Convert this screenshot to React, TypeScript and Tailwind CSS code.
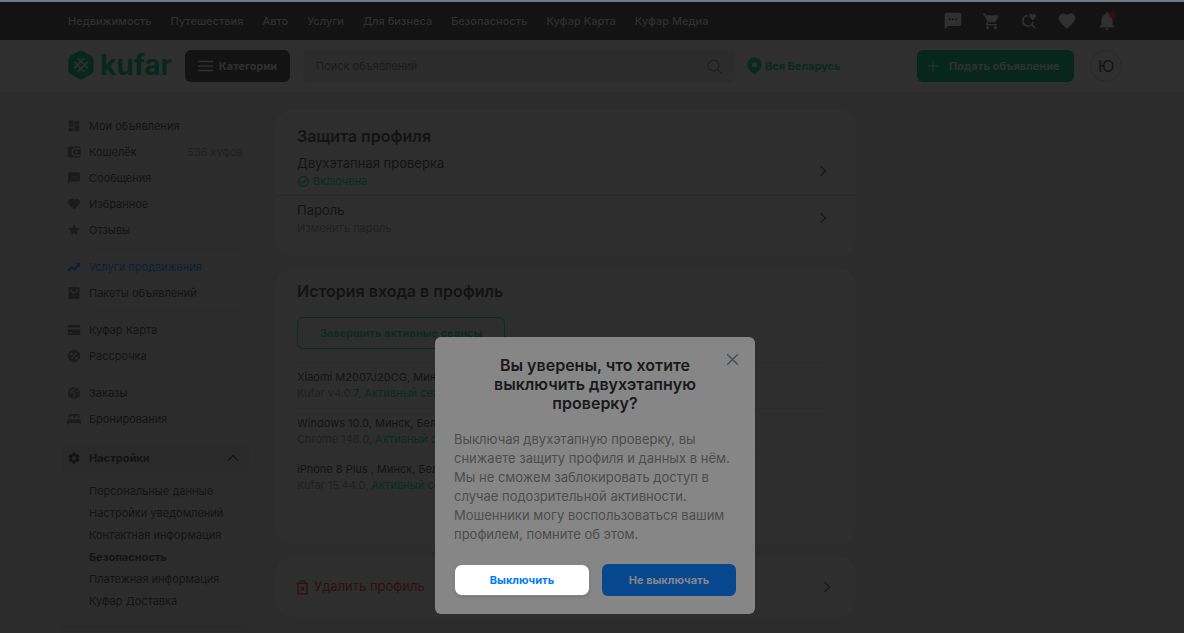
import type { ReactNode } from "react";
import {
  MdCheckCircleOutline,
  MdDashboard,
  MdFavorite,
  MdNotifications,
  MdSettings,
  MdShoppingCart,
  MdStar,
  MdTextsms,
} from "react-icons/md";

type MenuItem = {
  label: string;
  icon: ReactNode;
  note?: string;
  accent?: boolean;
};

const Chevron = ({ className }: { className?: string }) => (
  <svg
    className={className}
    width="12"
    height="12"
    viewBox="0 0 12 12"
    fill="none"
    stroke="currentColor"
    strokeWidth="1.1"
  >
    <path d="M3.5 1 8.5 6l-5 5" />
  </svg>
);

const LogoMark = () => (
  <svg width="27" height="30" viewBox="0 0 27 30">
    <path
      d="M10.7 1.3a4.4 4.4 0 0 1 4.4 0l8.1 4.5A4.4 4.4 0 0 1 25.5 9.7v10.6a4.4 4.4 0 0 1-2.3 3.9l-8.1 4.5a4.4 4.4 0 0 1-4.4 0l-8.1-4.5A4.4 4.4 0 0 1 .3 20.3V9.7a4.4 4.4 0 0 1 2.3-3.9z"
      fill="#08271c"
    />
    <g fill="none" stroke="#303030" strokeWidth="1.6">
      <path d="m12.9 11.4 3.6 3.6-3.6 3.6L9.3 15z" />
      <path d="m12.9 11.4-3.4-3.4M12.9 11.4l3.4-3.4M12.9 18.6l-3.4 3.4M12.9 18.6l3.4 3.4" />
      <path d="m9.3 15-3.5-3.4M9.3 15l-3.5 3.4M16.5 15l3.5-3.4M16.5 15l3.5 3.4" />
    </g>
  </svg>
);

const SearchHeartIcon = () => (
  <svg width="18" height="18" viewBox="0 0 18 18">
    <path
      d="M7.8 3.6a5.2 5.2 0 1 0 5.3 6.2M11.8 12.6l3.8 3.8"
      fill="none"
      stroke="currentColor"
      strokeWidth="1.7"
    />
    <path
      d="M12.6 8.2 9.7 5.3a2 2 0 0 1 0-2.8 1.9 1.9 0 0 1 2.9.2 1.9 1.9 0 0 1 2.9-.2 2 2 0 0 1 0 2.8z"
      fill="currentColor"
    />
  </svg>
);

const PinIcon = () => (
  <svg width="15" height="18" viewBox="0 0 15 18" fill="currentColor">
    <path
      fillRule="evenodd"
      d="M7.5.5A7.2 7.2 0 0 1 14.7 7.7c0 2.2-1 4-2.6 5.6L7.5 17.7l-4.6-4.4C1.3 11.7.3 9.9.3 7.7A7.2 7.2 0 0 1 7.5.5zm0 4.4a2.6 2.6 0 1 0 0 5.2 2.6 2.6 0 0 0 0-5.2z"
    />
  </svg>
);

const WalletIcon = () => (
  <svg width="14" height="14" viewBox="0 0 14 14">
    <path
      fill="currentColor"
      d="M1.6 1.4h10.8a.8.8 0 0 1 .8.8v.8H8.6a4 4 0 0 0 0 8h4.6v.8a.8.8 0 0 1-.8.8H1.6a.8.8 0 0 1-.8-.8V2.2a.8.8 0 0 1 .8-.8z"
    />
    <path
      fill="currentColor"
      fillRule="evenodd"
      d="M8.8 4.2h4.9v5.6H8.8a2.8 2.8 0 0 1 0-5.6zm.4 1.7a1.1 1.1 0 1 0 0 2.2 1.1 1.1 0 0 0 0-2.2z"
    />
  </svg>
);

const TrendIcon = () => (
  <svg width="14" height="14" viewBox="0 0 14 14">
    <path
      d="m1.200 11.200 3.600-4 2.700 2.300 4-4.700"
      fill="none"
      stroke="currentColor"
      strokeWidth="2"
    />
    <path d="M8 2.800h5v5z" fill="currentColor" />
  </svg>
);

const BagIcon = () => (
  <svg width="14" height="14" viewBox="0 0 14 14">
    <rect x="1.5" y="1" width="11" height="12" rx="1.2" fill="currentColor" />
    <path
      d="M4.300 3.500v.6a2.700 2.700 0 0 0 5.400 0v-.6"
      fill="none"
      stroke="#2c2c2c"
      strokeWidth="1.2"
    />
  </svg>
);

const CardIcon = () => (
  <svg width="14" height="14" viewBox="0 0 14 14">
    <path
      fill="currentColor"
      d="M2 2h10a1.200 1.200 0 0 1 1.200 1.200V4.500H.8V3.200A1.200 1.200 0 0 1 2 2zM.8 6.200h12.400v4.600A1.200 1.200 0 0 1 12 12H2a1.200 1.200 0 0 1-1.200-1.200z"
    />
    <path d="M2.500 9.500h2.600" stroke="#2c2c2c" strokeWidth="1.2" />
  </svg>
);

const PercentIcon = () => (
  <svg width="14" height="14" viewBox="0 0 14 14">
    <circle cx="7" cy="7" r="6.2" fill="currentColor" />
    <path d="m4.200 10.200 5.600-6.400" stroke="#2c2c2c" strokeWidth="1.2" />
    <circle cx="4.6" cy="4.8" r="1.2" fill="#2c2c2c" />
    <circle cx="9.4" cy="9.2" r="1.2" fill="#2c2c2c" />
  </svg>
);

const BoxIcon = () => (
  <svg width="14" height="14" viewBox="0 0 14 14">
    <path fill="currentColor" d="m7 .7 5.800 3v6.800L7 13.500l-5.800-3V3.700z" />
    <path
      d="M1 3.800 7 7l6-3.200M7 7v6.700M3.900 5.400l5.600-3.200M4 5.400v2.400"
      fill="none"
      stroke="#2c2c2c"
      strokeWidth="1"
    />
  </svg>
);

const BedIcon = () => (
  <svg width="14" height="14" viewBox="0 0 14 14" fill="currentColor">
    <path d="M1.500 6V3.200A1.200 1.200 0 0 1 2.700 2h8.600a1.200 1.200 0 0 1 1.200 1.200V6h-1.300V4.300H7.600V6H6.400V4.300H2.800V6zM.3 7.200h13.400V12.500h-1.300V11H1.600v1.500H.3z" />
  </svg>
);

const TrashIcon = () => (
  <svg
    width="13"
    height="15"
    viewBox="0 0 13 15"
    fill="none"
    stroke="currentColor"
    strokeWidth="1.3"
  >
    <path d="M.6 3.400h11.800M4 3.400V1.200h5v2.200M2 3.400v10.400h9V3.400M4.800 7l3.400 3.600M8.200 7l-3.400 3.600" />
  </svg>
);

const topLinks = [
  "Недвижимость",
  "Путешествия",
  "Авто",
  "Услуги",
  "Для бизнеса",
  "Безопасность",
  "Куфар Карта",
  "Куфар Медиа",
];

const menuGroups: MenuItem[][] = [
  [
    { label: "Мои объявления", icon: <MdDashboard size={14} /> },
    { label: "Кошелёк", icon: <WalletIcon />, note: "536 куфов" },
    { label: "Сообщения", icon: <MdTextsms size={14} /> },
    { label: "Избранное", icon: <MdFavorite size={14} /> },
    { label: "Отзывы", icon: <MdStar size={14} /> },
  ],
  [
    { label: "Услуги продвижения", icon: <TrendIcon />, accent: true },
    { label: "Пакеты объявлений", icon: <BagIcon /> },
  ],
  [
    { label: "Куфар Карта", icon: <CardIcon /> },
    { label: "Рассрочка", icon: <PercentIcon /> },
  ],
  [
    { label: "Заказы", icon: <BoxIcon /> },
    { label: "Бронирования", icon: <BedIcon /> },
  ],
];

const settingsLinks = [
  "Персональные данные",
  "Настройки уведомлений",
  "Контактная информация",
  "Безопасность",
  "Платежная информация",
  "Куфар Доставка",
];

const sessions = [
  { device: "Xiaomi M2007J20CG, Минск, Беларусь", client: "Kufar v4.0.7," },
  { device: "Windows 10.0, Минск, Беларусь", client: "Chrome 146.0," },
  { device: "iPhone 8 Plus , Минск, Беларусь", client: "Kufar 15.44.0," },
];

const TopBar = () => (
  <div className="border-t-2 border-[#737b80] bg-[#131313] pl-1.5 text-[#303030]">
    <div className="mx-auto flex h-[38px] max-w-[1054px] items-center justify-between">
      <nav className="flex gap-[19px] text-[11px] font-medium">
        {topLinks.map((link) => (
          <a key={link} href="#" className="whitespace-nowrap">
            {link}
          </a>
        ))}
      </nav>
      <div className="flex items-center gap-[19px] pr-1">
        <a href="#" aria-label="Сообщения">
          <MdTextsms size={20} />
        </a>
        <a href="#" aria-label="Корзина">
          <MdShoppingCart size={19} />
        </a>
        <a href="#" aria-label="Сохранённые поиски">
          <SearchHeartIcon />
        </a>
        <a href="#" aria-label="Избранное">
          <MdFavorite size={20} />
        </a>
        <a href="#" aria-label="Уведомления" className="relative">
          <MdNotifications size={22} />
          <span className="absolute right-0.5 top-0.5 h-[6px] w-[7px] rounded-sm bg-[#3a0c10]" />
        </a>
      </div>
    </div>
  </div>
);

const Header = () => (
  <header className="bg-[#2f2f2f] pl-1.5">
    <div className="mx-auto flex h-[52px] max-w-[1054px] items-center">
      <a href="#" className="flex w-[104px] shrink-0 items-center gap-[5px] pb-0.5 text-[#08271c]">
        <LogoMark />
        <span className="text-[28px] font-bold leading-7">kufar</span>
      </a>
      <button
        type="button"
        className="ml-[13px] flex h-8 w-[105px] shrink-0 items-center justify-center gap-1.5 rounded-md bg-[#131313] text-[11px] font-bold text-[#303030]"
      >
        <svg width="15" height="12" viewBox="0 0 15 12" stroke="currentColor" strokeWidth="1.6">
          <path d="M0 1.5h15M0 6h15M0 10.5h15" />
        </svg>
        Категории
      </button>
      <label className="ml-[13px] flex h-8 flex-1 items-center rounded-md bg-[#2c2c2c] px-[13px] text-[#1d1d1d]">
        <input
          type="search"
          aria-label="Поиск объявлений"
          placeholder="Поиск объявлений"
          className="w-full bg-transparent text-[11px] outline-none placeholder:text-[#1b1b1b]"
        />
        <svg
          className="shrink-0"
          width="15"
          height="15"
          viewBox="0 0 16 16"
          fill="none"
          stroke="currentColor"
          strokeWidth="1.1"
        >
          <circle cx="7" cy="7" r="5.8" />
          <path d="m11 11 4 4" />
        </svg>
      </label>
      <div className="w-[182px] shrink-0 pl-3">
        <button
          type="button"
          className="flex items-center gap-[3px] text-[11px] font-bold text-[#08291d]"
        >
          <PinIcon />
          Вся Беларусь
        </button>
      </div>
      <button
        type="button"
        className="flex h-8 w-[157px] shrink-0 items-center gap-2.5 rounded-md bg-[#08271c] pl-2.5 text-[11px] font-bold text-[#303030]"
      >
        <svg width="12" height="12" viewBox="0 0 12 12" stroke="currentColor" strokeWidth="1.2">
          <path d="M6 .5v11M.5 6h11" />
        </svg>
        Подать объявление
      </button>
      <button
        type="button"
        className="ml-4 size-8 shrink-0 rounded-full border border-[#292929] text-base text-[#131313]"
      >
        Ю
      </button>
    </div>
  </header>
);

const Sidebar = () => (
  <aside className="-ml-[7px] w-[188px] shrink-0 pt-[21px] text-[11px] text-[#131313]">
    {menuGroups.map((group, index) => (
      <div key={group[0].label} className="px-1.5">
        {index > 0 && <div className="my-[5px] ml-[22px] h-px bg-[#2a2a2a]" />}
        <ul>
          {group.map((item) => (
            <li key={item.label}>
              <a
                href="#"
                className={
                  item.accent
                    ? "flex h-[26px] items-center gap-2 text-[#0b1f37]"
                    : "flex h-[26px] items-center gap-2"
                }
              >
                <span className={item.accent ? "w-3.5" : "w-3.5 text-[#1b1b1b]"}>{item.icon}</span>
                {item.label}
                {item.note && <span className="ml-auto text-[#202020]">{item.note}</span>}
              </a>
            </li>
          ))}
        </ul>
      </div>
    ))}
    <button
      type="button"
      className="mt-3 flex h-7 w-full items-center gap-2 rounded-md bg-[#2a2a2a] px-1.5 font-bold"
    >
      <span className="w-3.5">
        <MdSettings size={14} />
      </span>
      Настройки
      <Chevron className="ml-auto mr-1 -rotate-90" />
    </button>
    <ul className="mt-2 pl-7">
      {settingsLinks.map((link) => (
        <li key={link}>
          <a
            href="#"
            className={
              link === "Безопасность"
                ? "flex h-[22px] items-center font-bold"
                : "flex h-[22px] items-center"
            }
          >
            {link}
          </a>
        </li>
      ))}
    </ul>
    <div className="mt-3.5 h-20 rounded-t-md border border-[#292929]" />
  </aside>
);

const Profile = () => (
  <main className="ml-[26px] flex w-[581px] flex-col gap-[13px] pt-[18px] text-[#131313]">
    <section className="rounded-2xl bg-[#2e2e2e] pb-5 pt-4">
      <h2 className="px-[22px] text-base font-semibold leading-5">Защита профиля</h2>
      <a
        href="#"
        className="mt-[7px] flex items-center justify-between border-b border-[#292929] pb-1.5 pl-[22px] pr-[27px]"
      >
        <span className="flex flex-col">
          <span className="text-[13px] leading-5">Двухэтапная проверка</span>
          <span className="flex items-center gap-[3px] text-[11px] leading-4 text-[#0a2b20]">
            <MdCheckCircleOutline size={13} />
            Включена
          </span>
        </span>
        <Chevron className="text-[#181818]" />
      </a>
      <a href="#" className="flex items-center justify-between pl-[22px] pr-[27px] pt-1">
        <span className="flex flex-col">
          <span className="text-[13px] leading-5">Пароль</span>
          <span className="text-[11px] leading-4 text-[#202020]">Изменить пароль</span>
        </span>
        <Chevron className="text-[#181818]" />
      </a>
    </section>

    <section className="rounded-2xl bg-[#2e2e2e] pb-11 pl-[22px] pr-[30px] pt-3">
      <h2 className="text-base font-semibold leading-5">История входа в профиль</h2>
      <button
        type="button"
        className="mt-4 h-8 w-[208px] rounded-md border border-[#0a2b20] text-[11px] font-bold text-[#0a2b20]"
      >
        Завершить активные сеансы
      </button>
      <ul className="mt-[13px] text-[11px] leading-4">
        {sessions.map((session) => (
          <li key={session.client} className="border-t border-[#2b2b2b] pb-[7px] pt-1.5">
            <p>{session.device}</p>
            <p className="text-[#202020]">
              {session.client} <span className="text-[#0a2b20]">Активный сеанс</span>
            </p>
          </li>
        ))}
      </ul>
    </section>

    <section className="rounded-2xl bg-[#2e2e2e]">
      <button
        type="button"
        className="flex h-[60px] w-full items-center gap-[5px] pl-[21px] pr-[23px] text-[13px] text-[#2d1013]"
      >
        <TrashIcon />
        Удалить профиль
        <Chevron className="ml-auto text-[#181818]" />
      </button>
    </section>
  </main>
);

const ConfirmDialog = () => (
  <div className="fixed inset-0 flex items-end justify-center pb-[19px] pl-1.5">
    <div
      role="dialog"
      aria-modal="true"
      aria-labelledby="confirm-title"
      className="relative w-80 rounded-md bg-[#868686] px-[19px] pb-[18px] pt-[19px]"
    >
      <button
        type="button"
        aria-label="Закрыть"
        className="absolute right-4 top-4 text-[#464c51]"
      >
        <svg width="13" height="13" viewBox="0 0 13 13" stroke="currentColor" strokeWidth="1.4">
          <path d="m1.200 1.200 10.600 10.600M11.800 1.200 1.200 11.800" />
        </svg>
      </button>
      <h1
        id="confirm-title"
        className="mx-auto max-w-[220px] text-center text-base font-semibold leading-[19px] text-[#191919]"
      >
        Вы уверены, что хотите выключить двухэтапную проверку?
      </h1>
      <p className="mt-[17px] text-[13px] leading-[19px] text-[#4c4c4c]">
        Выключая двухэтапную проверку, вы снижаете защиту профиля и данных в нём. Мы не сможем
        заблокировать доступ в случае подозрительной активности. Мошенники могу воспользоваться
        вашим профилем, помните об этом.
      </p>
      <div className="mt-5 flex gap-3 text-[11px] font-bold">
        <button
          type="button"
          className="h-8 flex-1 rounded-lg border border-[#868686] bg-white text-[#007aff] shadow-sm"
        >
          Выключить
        </button>
        <button type="button" className="h-8 flex-1 rounded-md bg-[#07478e] text-[#868686]">
          Не выключать
        </button>
      </div>
    </div>
  </div>
);

const App = () => {
  return (
    <div className="h-screen overflow-hidden bg-[#2c2c2c] font-['Inter',sans-serif]">
      <TopBar />
      <Header />
      <div className="pl-1.5">
        <div className="mx-auto flex max-w-[1054px]">
          <Sidebar />
          <Profile />
        </div>
      </div>
      <ConfirmDialog />
    </div>
  );
};

export default App;
